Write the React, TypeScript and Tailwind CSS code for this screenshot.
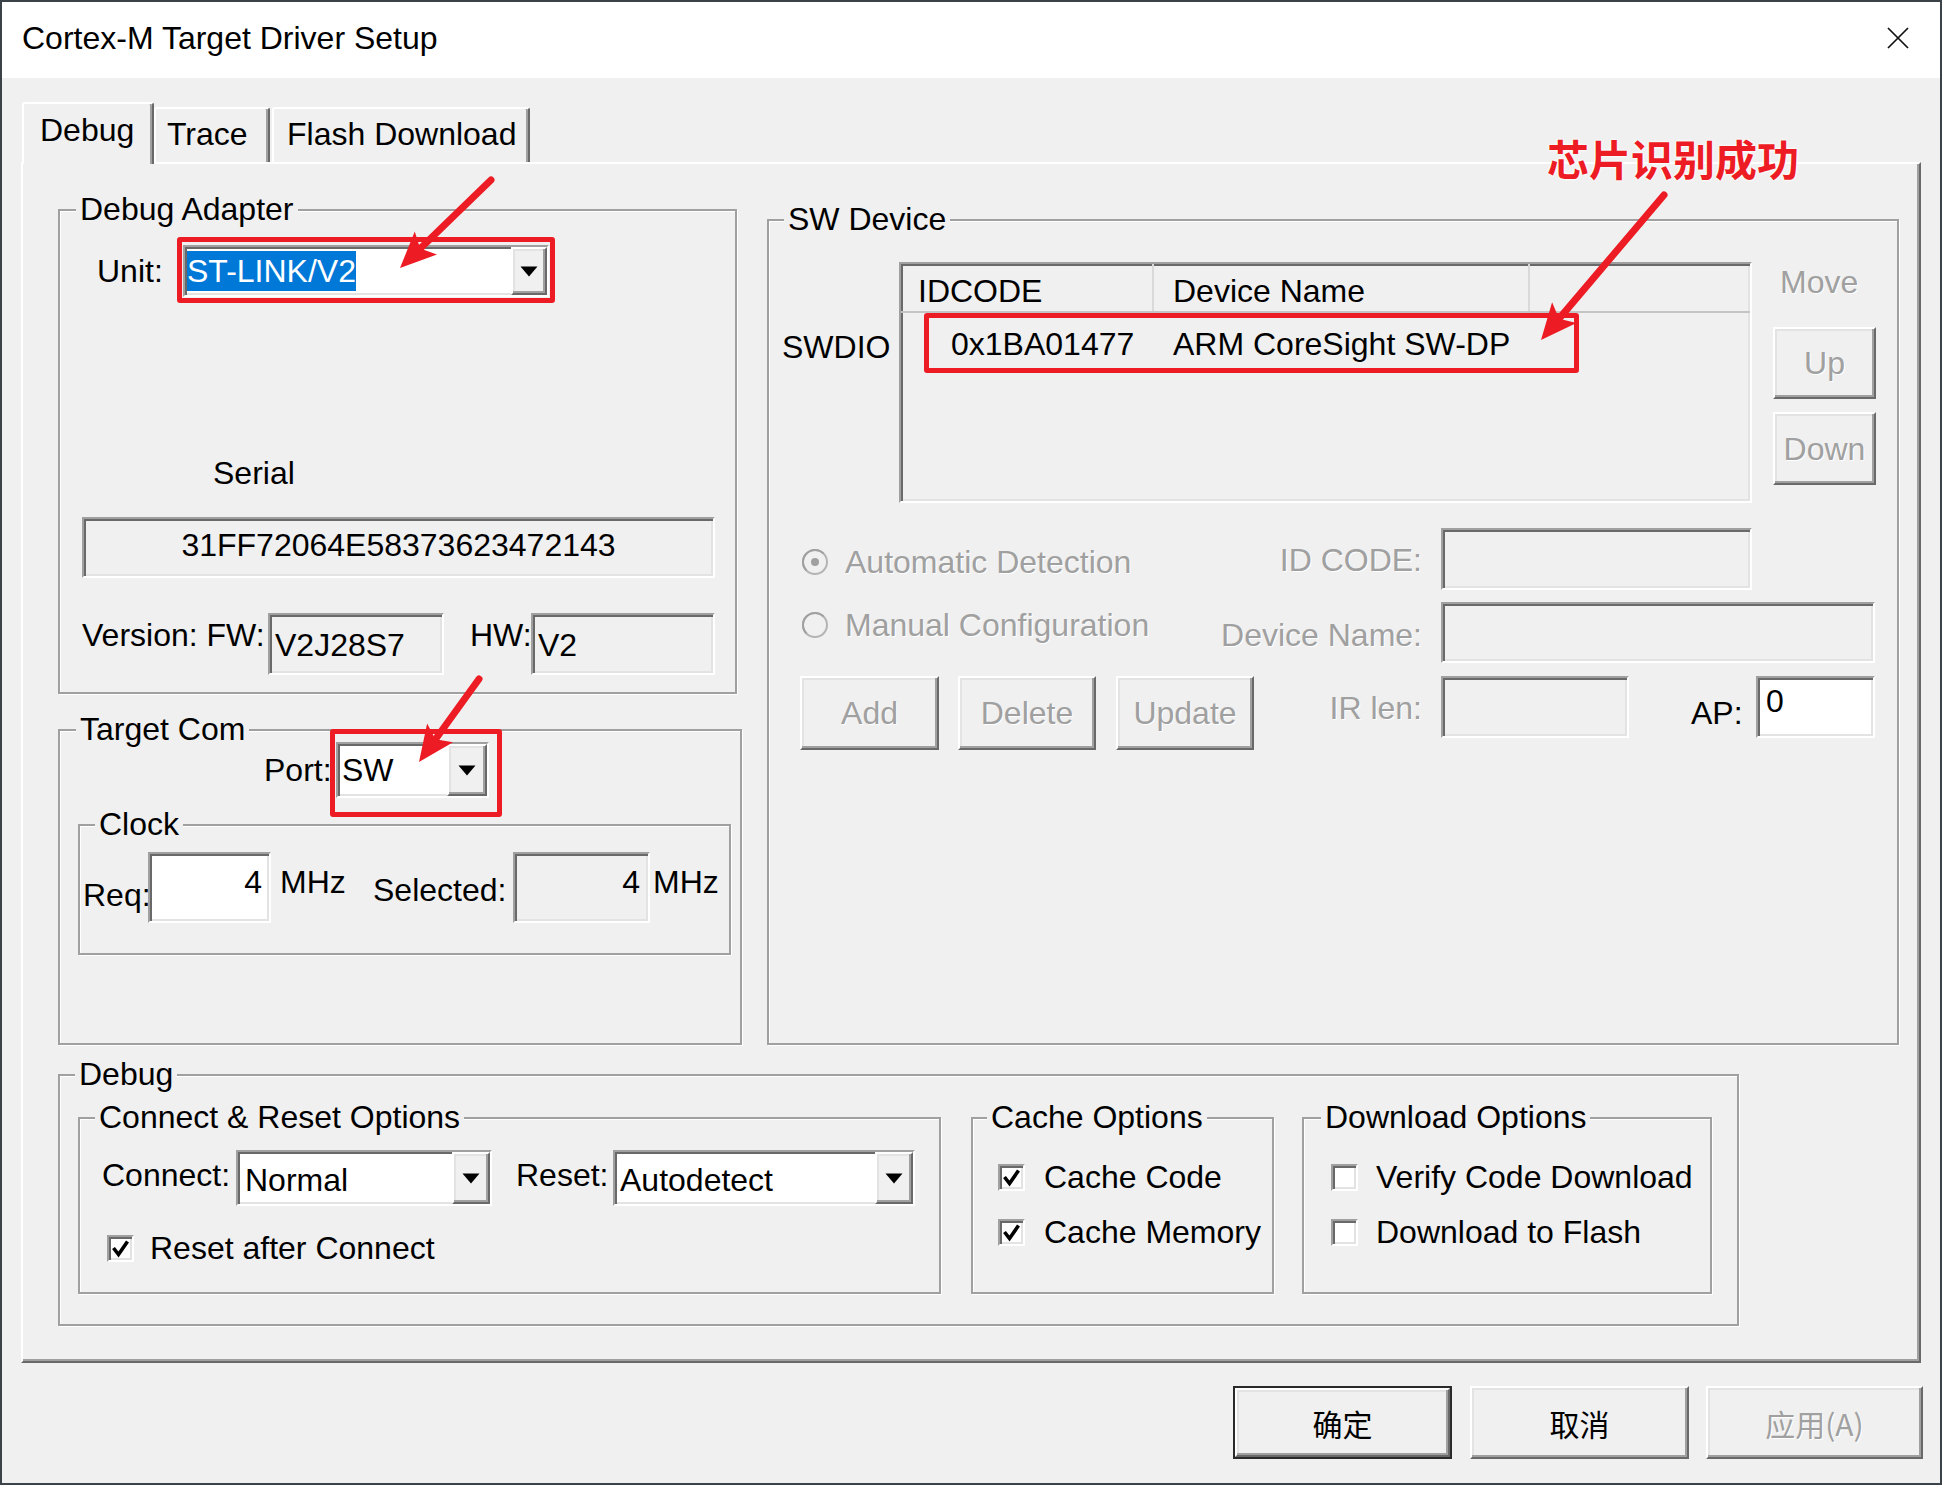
import React from "react";

const FONT = "font-['Liberation_Sans','Noto_Sans_CJK_SC',sans-serif]";
const CJK = "font-['Noto_Sans_CJK_SC','Liberation_Sans',sans-serif]";

const SUNKEN =
  "border-2 border-t-[#a0a0a0] border-l-[#a0a0a0] border-b-white border-r-white shadow-[inset_2px_2px_0_#696969,inset_-2px_-2px_0_#e3e3e3]";
const RAISED =
  "border-2 border-t-white border-l-white border-b-[#696969] border-r-[#696969] shadow-[inset_-2px_-2px_0_#a0a0a0,inset_2px_2px_0_#e3e3e3] bg-[#f0f0f0]";
const GRAY = "text-[#a0a0a0] [text-shadow:1px_1px_0_#fff]";

function Group({
  label,
  className = "",
  labelClass = "ml-[16px]",
  children,
}: {
  label: string;
  className?: string;
  labelClass?: string;
  children?: React.ReactNode;
}) {
  return (
    <div
      className={`border-2 border-[#a0a0a0] shadow-[inset_1px_1px_0_#fff,1px_1px_0_#fff] flex flex-col shrink-0 ${className}`}
    >
      <div
        className={`-mt-[21px] h-[38px] w-fit px-[4px] bg-[#f0f0f0] leading-[38px] shrink-0 whitespace-nowrap ${labelClass}`}
      >
        {label}
      </div>
      {children}
    </div>
  );
}

function Tri() {
  return (
    <svg width="18" height="11" viewBox="0 0 18 11">
      <path d="M0.5 0.5H17.5L9 10.5Z" fill="#000" />
    </svg>
  );
}

function Combo({
  className,
  children,
  btn = "w-[36px]",
}: {
  className: string;
  children: React.ReactNode;
  btn?: string;
}) {
  return (
    <div className={`${SUNKEN} bg-white flex items-stretch shrink-0 ${className}`}>
      <div className="flex-1 flex items-center overflow-hidden whitespace-nowrap">{children}</div>
      <div className={`${RAISED} ${btn} flex items-center justify-center`}>
        <Tri />
      </div>
    </div>
  );
}

function Check({ checked }: { checked: boolean }) {
  return (
    <div className={`${SUNKEN} bg-white w-[27px] h-[27px] shrink-0 flex items-center justify-center`}>
      {checked && (
        <svg width="19" height="19" viewBox="0 0 19 19">
          <path d="M2.5 9L7.5 15.5L16.5 2.5" stroke="#000" strokeWidth="3.6" fill="none" />
        </svg>
      )}
    </div>
  );
}

function Radio({ dot }: { dot: boolean }) {
  return (
    <svg width="28" height="28" viewBox="0 0 28 28" className="shrink-0">
      <circle cx="14" cy="14" r="12" fill="#f0f0f0" stroke="#b4b4b4" strokeWidth="2" />
      <path d="M5.5 22.5A12 12 0 0 1 22.5 5.5" stroke="#a0a0a0" strokeWidth="2" fill="none" />
      {dot && <circle cx="14" cy="14" r="4" fill="#a0a0a0" />}
    </svg>
  );
}

function Arrow({ x1, y1, x2, y2 }: { x1: number; y1: number; x2: number; y2: number }) {
  const dx = x2 - x1;
  const dy = y2 - y1;
  const len = Math.sqrt(dx * dx + dy * dy);
  const ux = dx / len;
  const uy = dy / len;
  const L = 36;
  const W = 16;
  const bx = x2 - ux * L;
  const by = y2 - uy * L;
  const nx = -uy;
  const ny = ux;
  const pts = `${x2},${y2} ${bx + nx * W},${by + ny * W} ${bx + ux * 8},${by + uy * 8} ${bx - nx * W},${by - ny * W}`;
  return (
    <g>
      <line x1={x1} y1={y1} x2={bx + ux * 6} y2={by + uy * 6} stroke="#ed1c24" strokeWidth="7" strokeLinecap="round" />
      <polygon points={pts} fill="#ed1c24" />
    </g>
  );
}

export default function App() {
  return (
    <div
      className={`relative w-[1942px] h-[1485px] bg-[#f0f0f0] border-2 border-[#3b4248] overflow-hidden text-black text-[32px] leading-[38px] ${FONT}`}
    >
      {/* Title bar */}
      <div className="h-[76px] bg-white flex items-center justify-between pl-[20px] pr-[31px] pb-[4px]">
        <span className="text-[32px]">Cortex-M Target Driver Setup</span>
        <svg width="22" height="22" viewBox="0 0 22 22">
          <path d="M1 1L21 21M21 1L1 21" stroke="#111" strokeWidth="1.7" />
        </svg>
      </div>

      {/* Tabs */}
      <div className="flex items-end h-[60px] mt-[24px] ml-[20px]">
        <div className="relative z-10 w-[132px] h-[62px] -mb-[2px] bg-[#f0f0f0] border-t-2 border-l-2 border-r-2 border-t-white border-l-white border-r-[#696969] shadow-[inset_-2px_0_0_#a0a0a0] rounded-t-[3px] pl-[16px] pt-[7px]">
          Debug
        </div>
        <div className="w-[116px] h-[55px] border-t-2 border-l-2 border-r-2 border-t-white border-l-white border-r-[#696969] shadow-[inset_-2px_0_0_#a0a0a0] rounded-t-[3px] pl-[11px] pt-[6px]">
          Trace
        </div>
        <div className="ml-[2px] w-[258px] h-[55px] border-t-2 border-l-2 border-r-2 border-t-white border-l-white border-r-[#696969] shadow-[inset_-2px_0_0_#a0a0a0] rounded-t-[3px] pl-[13px] pt-[6px]">
          Flash Download
        </div>
      </div>

      {/* Panel */}
      <div className="ml-[19px] w-[1900px] h-[1201px] border-2 border-t-white border-l-white border-b-[#696969] border-r-[#696969] shadow-[inset_-2px_-2px_0_#a0a0a0] flex flex-col">
        <div className="flex items-start mt-[45px] ml-[35px]">
          {/* Left column */}
          <div className="flex flex-col w-[684px] shrink-0">
            <Group label="Debug Adapter" className="w-[679px] h-[485px]">
              <div className="flex items-center mt-[17px] h-[52px] pl-[37px]">
                <span className="w-[86px] shrink-0">Unit:</span>
                <Combo className="w-[366px] h-[52px]" btn="w-[36px]">
                  <span className="ml-[2px] bg-[#0078d7] text-white leading-[40px]">ST-LINK/V2</span>
                </Combo>
              </div>
              <div className="mt-[157px] ml-[153px]">Serial</div>
              <div className={`${SUNKEN} mt-[25px] ml-[22px] w-[633px] h-[61px] flex items-center justify-center pb-[6px]`}>
                31FF72064E58373623472143
              </div>
              <div className="flex items-start mt-[35px] ml-[22px]">
                <span className="w-[186px] mt-[3px] whitespace-nowrap shrink-0">Version: FW:</span>
                <div className={`${SUNKEN} w-[176px] h-[62px] flex items-center pl-[5px] pt-[2px] shrink-0`}>V2J28S7</div>
                <span className="ml-[26px] w-[61px] mt-[3px] shrink-0">HW:</span>
                <div className={`${SUNKEN} w-[184px] h-[62px] flex items-center pl-[5px] pt-[2px] shrink-0`}>V2</div>
              </div>
            </Group>

            <Group label="Target Com" className="mt-[35px] w-[684px] h-[316px]">
              <div className="flex items-center -mt-[6px] h-[56px] pl-[204px]">
                <span className="w-[72px] shrink-0">Port:</span>
                <Combo className="w-[153px] h-[56px]" btn="w-[40px]">
                  <span className="ml-[4px]">SW</span>
                </Combo>
              </div>
              <Group label="Clock" className="mt-[26px] ml-[18px] w-[653px] h-[131px]" labelClass="ml-[15px]">
                <div className="flex items-start mt-[9px] pl-[3px]">
                  <span className="mt-[24px] w-[65px] shrink-0">Req:</span>
                  <div className={`${SUNKEN} bg-white w-[123px] h-[71px] flex justify-end pr-[7px] pt-[9px] shrink-0`}>4</div>
                  <span className="ml-[9px] mt-[11px] w-[93px] shrink-0">MHz</span>
                  <span className="mt-[19px] w-[140px] shrink-0">Selected:</span>
                  <div className={`${SUNKEN} w-[137px] h-[71px] flex justify-end pr-[8px] pt-[9px] shrink-0`}>4</div>
                  <span className="ml-[3px] mt-[11px] shrink-0">MHz</span>
                </div>
              </Group>
            </Group>
          </div>

          {/* Right column */}
          <Group label="SW Device" className="ml-[25px] mt-[10px] w-[1132px] h-[826px]" labelClass="ml-[15px]">
            <div className="flex items-start mt-[24px] pl-[13px]">
              <span className="mt-[66px] w-[117px] shrink-0">SWDIO</span>
              <div className={`${SUNKEN} w-[853px] h-[241px] flex flex-col shrink-0`}>
                <div className="flex h-[49px] border-b-2 border-b-[#c4c4c4] shrink-0">
                  <div className="w-[253px] pl-[17px] pt-[6px] flex items-center border-r-2 border-r-[#d9d9d9]">IDCODE</div>
                  <div className="w-[376px] pl-[19px] pt-[6px] flex items-center border-r-2 border-r-[#d9d9d9]">Device Name</div>
                  <div className="flex-1" />
                </div>
                <div className="flex h-[62px] items-center">
                  <div className="w-[253px] pl-[50px]">0x1BA01477</div>
                  <div className="pl-[19px]">ARM CoreSight SW-DP</div>
                </div>
              </div>
              <div className="ml-[21px] flex flex-col w-[103px] shrink-0">
                <span className={`mt-[1px] pl-[7px] ${GRAY}`}>Move</span>
                <div className={`${RAISED} mt-[26px] h-[72px] flex items-center justify-center ${GRAY}`}>Up</div>
                <div className={`${RAISED} mt-[13px] h-[73px] flex items-center justify-center ${GRAY}`}>Down</div>
              </div>
            </div>

            <div className="flex items-start mt-[25px] h-[62px]">
              <div className="w-[672px] flex items-start shrink-0">
                <div className={`ml-[32px] mt-[15px] flex items-center ${GRAY}`}>
                  <Radio dot />
                  <span className="ml-[16px] whitespace-nowrap">Automatic Detection</span>
                </div>
                <div className="flex-1" />
                <span className={`mt-[13px] mr-[19px] ${GRAY}`}>ID CODE:</span>
              </div>
              <div className={`${SUNKEN} w-[311px] h-[62px] shrink-0`} />
            </div>

            <div className="flex items-start mt-[12px] h-[61px]">
              <div className="w-[672px] flex items-start shrink-0">
                <div className={`ml-[32px] mt-[4px] flex items-center ${GRAY}`}>
                  <Radio dot={false} />
                  <span className="ml-[16px] whitespace-nowrap">Manual Configuration</span>
                </div>
                <div className="flex-1" />
                <span className={`mt-[14px] mr-[19px] ${GRAY}`}>Device Name:</span>
              </div>
              <div className={`${SUNKEN} w-[434px] h-[61px] shrink-0`} />
            </div>

            <div className="flex items-start mt-[13px] pl-[31px]">
              <div className={`${RAISED} w-[139px] h-[74px] flex items-center justify-center shrink-0 ${GRAY}`}>Add</div>
              <div className={`${RAISED} ml-[19px] w-[138px] h-[74px] flex items-center justify-center shrink-0 ${GRAY}`}>Delete</div>
              <div className={`${RAISED} ml-[20px] w-[138px] h-[74px] flex items-center justify-center shrink-0 ${GRAY}`}>Update</div>
              <span className={`ml-[20px] w-[148px] text-right mt-[13px] shrink-0 ${GRAY}`}>IR len:</span>
              <div className={`${SUNKEN} ml-[19px] w-[188px] h-[62px] shrink-0`} />
              <span className="ml-[62px] w-[65px] mt-[18px] shrink-0">AP:</span>
              <div className={`${SUNKEN} bg-white w-[119px] h-[62px] pl-[8px] pt-[4px] shrink-0`}>0</div>
            </div>
          </Group>
        </div>

        {/* Bottom Debug group */}
        <Group label="Debug" className="mt-[29px] ml-[35px] w-[1681px] h-[252px]" labelClass="ml-[15px]">
          <div className="flex items-start mt-[24px]">
            <Group label="Connect & Reset Options" className="ml-[18px] w-[863px] h-[177px]" labelClass="ml-[15px]">
              <div className="flex items-center mt-[14px] h-[56px] pl-[22px]">
                <span className="w-[134px] mb-[6px] shrink-0">Connect:</span>
                <Combo className="w-[256px] h-[56px]" btn="w-[38px]">
                  <span className="ml-[7px] mt-[4px]">Normal</span>
                </Combo>
                <span className="ml-[24px] w-[97px] mb-[6px] shrink-0">Reset:</span>
                <Combo className="w-[302px] h-[56px]" btn="w-[38px]">
                  <span className="ml-[5px] mt-[4px]">Autodetect</span>
                </Combo>
              </div>
              <div className="flex items-center mt-[23px] h-[38px] pl-[27px]">
                <Check checked />
                <span className="ml-[16px] whitespace-nowrap">Reset after Connect</span>
              </div>
            </Group>

            <Group label="Cache Options" className="ml-[30px] w-[303px] h-[177px]" labelClass="ml-[14px]">
              <div className="flex items-center mt-[22px] h-[38px] pl-[25px]">
                <Check checked />
                <span className="ml-[19px] whitespace-nowrap">Cache Code</span>
              </div>
              <div className="flex items-center mt-[17px] h-[38px] pl-[25px]">
                <Check checked />
                <span className="ml-[19px] whitespace-nowrap">Cache Memory</span>
              </div>
            </Group>

            <Group label="Download Options" className="ml-[28px] w-[410px] h-[177px]" labelClass="ml-[17px]">
              <div className="flex items-center mt-[22px] h-[38px] pl-[27px] w-[395px] overflow-hidden">
                <Check checked={false} />
                <span className="ml-[18px] whitespace-nowrap">Verify Code Download</span>
              </div>
              <div className="flex items-center mt-[17px] h-[38px] pl-[27px]">
                <Check checked={false} />
                <span className="ml-[18px] whitespace-nowrap">Download to Flash</span>
              </div>
            </Group>
          </div>
        </Group>
      </div>

      {/* Dialog buttons */}
      <div className={`flex justify-end mt-[23px] pr-[17px] text-[30px] ${CJK}`}>
        <div className="w-[219px] h-[73px] border-2 border-[#2a2a2a] flex">
          <div className={`${RAISED} flex-1 flex items-center justify-center`}>确定</div>
        </div>
        <div className={`${RAISED} ml-[18px] w-[219px] h-[73px] flex items-center justify-center`}>取消</div>
        <div className={`${RAISED} ml-[17px] w-[217px] h-[73px] flex items-center justify-center ${GRAY}`}>应用(A)</div>
      </div>

      {/* Annotations */}
      <div className="absolute -left-[2px] -top-[2px] w-[1942px] h-[1485px] pointer-events-none">
        <div className="absolute left-[177px] top-[237px] w-[378px] h-[66px] border-[5px] border-[#ed1c24] rounded-[3px]" />
        <div className="absolute left-[330px] top-[729px] w-[172px] h-[88px] border-[5px] border-[#ed1c24] rounded-[3px]" />
        <div className="absolute left-[924px] top-[313px] w-[655px] h-[60px] border-[5px] border-[#ed1c24] rounded-[3px]" />
        <div
          className={`absolute left-[1547px] top-[132px] text-[42px] leading-[52px] font-bold text-[#ed1c24] whitespace-nowrap [text-shadow:0_0_3px_#fff,0_0_3px_#fff] ${CJK}`}
        >
          芯片识别成功
        </div>
        <svg className="absolute left-0 top-0" width="1942" height="1485" viewBox="0 0 1942 1485">
          <Arrow x1={491} y1={180} x2={400} y2={268} />
          <Arrow x1={479} y1={679} x2={419} y2={762} />
          <Arrow x1={1664} y1={195} x2={1541} y2={340} />
        </svg>
      </div>
    </div>
  );
}
